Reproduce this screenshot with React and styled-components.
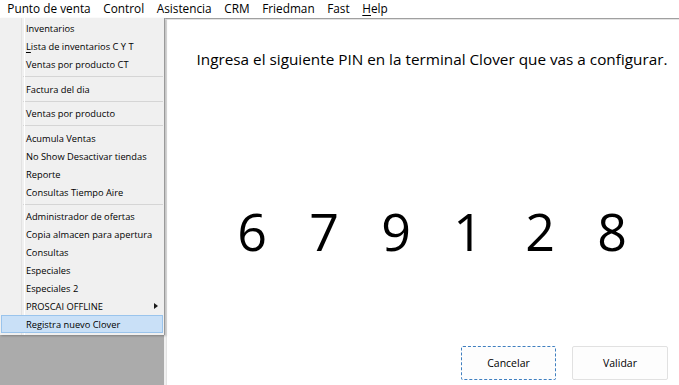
import React from 'react';
import styled, { createGlobalStyle } from 'styled-components';

const GlobalStyle = createGlobalStyle`
  html, body {
    margin: 0;
    padding: 0;
    overflow: hidden;
    background: #ffffff;
  }
  * {
    box-sizing: border-box;
  }
`;

const Window = styled.div`
  position: relative;
  display: flex;
  flex-direction: column;
  width: 679px;
  height: 385px;
  overflow: hidden;
  font-family: 'Open Sans', 'Noto Sans', sans-serif;
  color: #000;
`;

const MenuBar = styled.div`
  display: flex;
  align-items: center;
  height: 18px;
  padding-left: 1px;
  background: #ffffff;
  font-size: 11.8px;
`;

const MenuTitle = styled.div`
  height: 18px;
  line-height: 17px;
  padding: 0 6.3px;
  white-space: nowrap;

  u {
    text-decoration-thickness: 1px;
    text-underline-offset: 2px;
  }
`;

const Workspace = styled.div`
  flex: 1;
  display: flex;
  background: #ababab;
  padding-left: 164px;
  overflow: hidden;
`;

const ChildWindow = styled.div`
  flex: 0 0 534px;
  display: flex;
  flex-direction: column;
  background: #ffffff;
  border-top: 1px solid #a0a0a0;
  border-left: 2px solid #f0f0f0;
  box-shadow: inset 1px 1px 0 #e3e3e3;
  padding: 0 30px 5px 0;
`;

const Prompt = styled.div`
  margin-top: 28px;
  text-align: center;
  font-size: 15.3px;
  line-height: 24px;
  padding-left: 30px;
  white-space: nowrap;
`;

const PinRow = styled.div`
  display: flex;
  justify-content: center;
  gap: 42px;
  margin-top: 130px;
  padding-left: 30px;
`;

const Digit = styled.span`
  width: 30px;
  text-align: center;
  font-size: 52px;
  line-height: 60px;
`;

const Actions = styled.div`
  margin-top: auto;
  display: flex;
  justify-content: flex-end;
  gap: 16px;
`;

const Button = styled.button`
  width: ${(p) => p.$w}px;
  height: 34px;
  font-family: 'Open Sans', 'Noto Sans', sans-serif;
  font-size: 10.5px;
  color: #000;
  background: #fdfdfd;
  border: 1px ${(p) => (p.$focus ? 'dashed #3f7fc0' : 'solid #e1e1e1')};
  border-radius: 2px;
  padding: 0;
`;

const Dropdown = styled.div`
  position: absolute;
  top: 18px;
  left: 0;
  width: 165px;
  padding: 1px 1px 2px 1px;
  background: #f0f0f0;
  border-right: 1px solid #9a9a9a;
  box-shadow: 1px 1px 2px rgba(0, 0, 0, 0.25);
  font-size: 9.3px;
  z-index: 2;

  &::before {
    content: '';
    position: absolute;
    top: 0;
    bottom: 0;
    left: 21px;
    width: 2px;
    border-left: 1px solid #e2e2e2;
    border-right: 1px solid #ffffff;
  }
`;

const Item = styled.div`
  position: relative;
  display: flex;
  align-items: center;
  justify-content: space-between;
  height: 18px;
  padding: 0 4px 0 24px;
  white-space: nowrap;
  background: ${(p) => (p.$active ? '#c9e0f7' : 'transparent')};
  border: 1px solid ${(p) => (p.$active ? '#9ac4ec' : 'transparent')};

  u {
    text-decoration-thickness: 1px;
    text-underline-offset: 2px;
  }
`;

const Arrow = styled.span`
  width: 0;
  height: 0;
  border-top: 3.5px solid transparent;
  border-bottom: 3.5px solid transparent;
  border-left: 4px solid #1a1a1a;
`;

const Separator = styled.div`
  height: ${(p) => p.$h}px;
  display: flex;
  align-items: center;
  padding-left: 22px;

  &::after {
    content: '';
    flex: 1;
    height: 1px;
    background: #d5d5d5;
  }
`;

const menus = [
  { label: 'Punto de venta' },
  { label: 'Control' },
  { label: 'Asistencia' },
  { label: 'CRM' },
  { label: 'Friedman' },
  { label: 'Fast' },
  { label: 'Help', mnemonic: true },
];

const entries = [
  'Inventarios',
  'Lista de inventarios C Y T',
  'Ventas por producto CT',
  7,
  'Factura del dia',
  6,
  'Ventas por producto',
  7,
  'Acumula Ventas',
  'No Show Desactivar tiendas',
  'Reporte',
  'Consultas Tiempo Aire',
  6,
  'Administrador de ofertas',
  'Copia almacen para apertura',
  'Consultas',
  'Especiales',
  'Especiales 2',
  'PROSCAI OFFLINE',
  'Registra nuevo Clover',
];

const pin = ['6', '7', '9', '1', '2', '8'];

const renderLabel = (text) => {
  if (text.startsWith('Lista')) {
    return (
      <span>
        <u>L</u>
        {text.slice(1)}
      </span>
    );
  }
  return <span>{text}</span>;
};

const App = () => {
  return (
    <Window>
      <GlobalStyle />
      <MenuBar>
        {menus.map((m) => (
          <MenuTitle key={m.label}>
            {m.mnemonic ? (
              <>
                <u>{m.label[0]}</u>
                {m.label.slice(1)}
              </>
            ) : (
              m.label
            )}
          </MenuTitle>
        ))}
      </MenuBar>
      <Workspace>
        <ChildWindow>
          <Prompt>Ingresa el siguiente PIN en la terminal Clover que vas a configurar.</Prompt>
          <PinRow>
            {pin.map((d, i) => (
              <Digit key={i}>{d}</Digit>
            ))}
          </PinRow>
          <Actions>
            <Button $w={95} $focus>
              Cancelar
            </Button>
            <Button $w={96}>Validar</Button>
          </Actions>
        </ChildWindow>
      </Workspace>
      <Dropdown>
        {entries.map((e, i) =>
          typeof e === 'number' ? (
            <Separator key={i} $h={e} />
          ) : (
            <Item key={i} $active={e === 'Registra nuevo Clover'}>
              {renderLabel(e)}
              {e === 'PROSCAI OFFLINE' && <Arrow />}
            </Item>
          )
        )}
      </Dropdown>
    </Window>
  );
};

export default App;
